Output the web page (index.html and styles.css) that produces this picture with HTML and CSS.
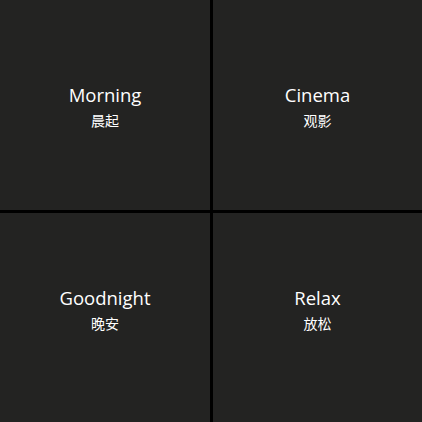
FILE: index.html
```html
<!DOCTYPE html>
<html>
<head>
<meta charset="utf-8">
<link rel="stylesheet" href="styles.css">
</head>
<body>
<div class="grid">
  <div class="tile top"><div class="en">Morning</div><div class="zh">晨起</div></div>
  <div class="tile top"><div class="en">Cinema</div><div class="zh">观影</div></div>
  <div class="tile bottom"><div class="en">Goodnight</div><div class="zh">晚安</div></div>
  <div class="tile bottom"><div class="en">Relax</div><div class="zh">放松</div></div>
</div>
</body>
</html>
```
FILE: styles.css
```css
html, body {
  margin: 0;
  padding: 0;
  background: #000;
}
.grid {
  width: 422px;
  height: 422px;
  display: grid;
  grid-template-columns: 210px 209px;
  grid-template-rows: 210px 209px;
  gap: 3px;
}
.tile {
  background: #232322;
  display: flex;
  flex-direction: column;
  align-items: center;
  justify-content: flex-start;
  color: #fff;
  font-family: "Open Sans", "Noto Sans CJK SC", sans-serif;
  box-sizing: border-box;
}
.tile.top {
  padding-top: 84px;
}
.tile.bottom {
  padding-top: 74px;
}
.en {
  font-size: 18.5px;
  line-height: 22px;
}
.zh {
  font-family: "Noto Sans CJK SC", sans-serif;
  font-size: 14px;
  line-height: 20px;
  margin-top: 4px;
}
```
